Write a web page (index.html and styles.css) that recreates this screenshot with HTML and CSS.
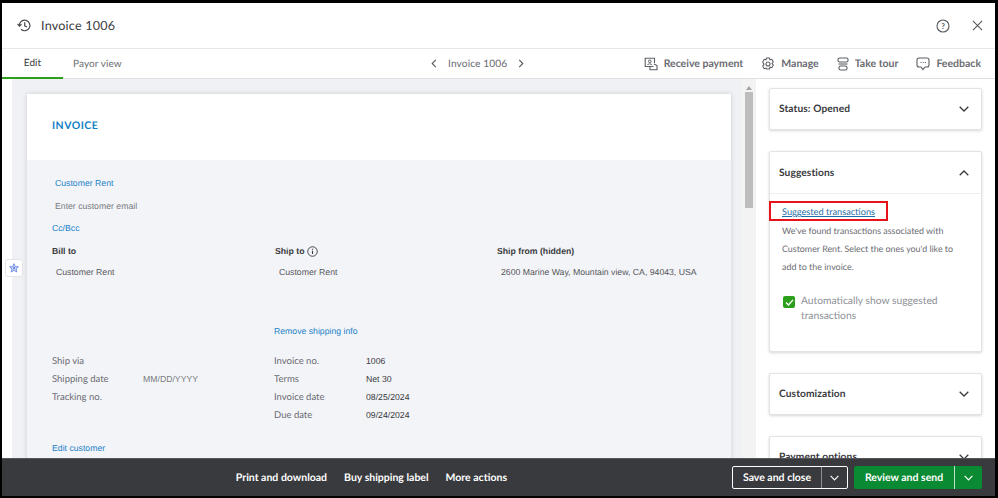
FILE: index.html
```html
<!DOCTYPE html>
<html lang="en">
<head>
<meta charset="utf-8">
<title>Invoice 1006</title>
<link rel="stylesheet" href="styles.css">
</head>
<body>
<div class="frame">
  <header class="topbar">
    <div class="title-group">
      <svg class="icon-history" viewBox="0 0 16 16" width="15" height="15"><path d="M2.6 8a5.6 5.6 0 1 1 1.7 4" fill="none" stroke="#4a4c50" stroke-width="1.3"/><path d="M0.6 6.4 2.6 8.6 4.8 6.6" fill="none" stroke="#4a4c50" stroke-width="1.3"/><path d="M8.2 4.6V8.300l2.400 1.300" fill="none" stroke="#4a4c50" stroke-width="1.3"/></svg>
      <h1 class="title">Invoice 1006</h1>
    </div>
    <div class="top-actions">
      <svg viewBox="0 0 14 14" width="14" height="14"><circle cx="7" cy="7" r="6" fill="none" stroke="#55575b" stroke-width="1.100"/><text x="7" y="9.800" class="q-mark">?</text></svg>
      <svg viewBox="0 0 12 12" width="11" height="11"><path d="M1 1 11 11M11 1 1 11" stroke="#55575b" stroke-width="1.200" fill="none"/></svg>
    </div>
  </header>

  <nav class="tabbar">
    <div class="tabs">
      <span class="tab tab-active">Edit</span>
      <span class="tab">Payor view</span>
    </div>
    <div class="pager">
      <svg viewBox="0 0 6 10" width="6" height="9"><path d="M5 1 1 5l4 4" fill="none" stroke="#55575b" stroke-width="1.200"/></svg>
      <span>Invoice 1006</span>
      <svg viewBox="0 0 6 10" width="6" height="9"><path d="M1 1l4 4-4 4" fill="none" stroke="#55575b" stroke-width="1.200"/></svg>
    </div>
    <div class="tools">
      <span class="tool"><svg viewBox="0 0 14 14" width="14" height="14"><path d="M9.500 9.500H1.200V1.200H10.500V6" fill="none" stroke="#5c5f64" stroke-width="1.100"/><circle cx="5.800" cy="4.300" r="1.300" fill="none" stroke="#5c5f64"/><path d="M3.400 8c.4-1.500 4.200-1.500 4.800 0" fill="none" stroke="#5c5f64"/><path d="M6 10v2.800h7V8.500L10 7" fill="none" stroke="#5c5f64" stroke-width="1.100"/></svg>Receive payment</span>
      <span class="tool"><svg viewBox="0 0 14 14" width="14" height="14"><path d="M5.500 1h3l.5 1.800 1.800-.5 1.500 2.600-1.300 1.600 1.300 1.600-1.500 2.600-1.800-.5-.5 1.800h-3L5 11.200l-1.800.5-1.500-2.600L3 7.500 1.700 4.900l1.500-2.600 1.800.5z" fill="none" stroke="#5c5f64" stroke-width="1.100"/><circle cx="7" cy="7" r="2" fill="none" stroke="#5c5f64" stroke-width="1.100"/></svg>Manage</span>
      <span class="tool"><svg viewBox="0 0 12 14" width="12" height="14"><rect x="1" y="1" width="10" height="4" rx="1.500" fill="none" stroke="#5c5f64" stroke-width="1.100"/><rect x="2" y="9" width="8" height="4" rx="1.500" fill="none" stroke="#5c5f64" stroke-width="1.100"/><path d="M1.500 7h9" stroke="#5c5f64" stroke-width="1.100"/></svg>Take tour</span>
      <span class="tool"><svg viewBox="0 0 14 14" width="14" height="14"><path d="M3 1h8a2 2 0 0 1 2 2v5a2 2 0 0 1-2 2H9l-2 2.600L5 10H3a2 2 0 0 1-2-2V3a2 2 0 0 1 2-2z" fill="none" stroke="#5c5f64" stroke-width="1.100"/><path d="M4.500 5.500h1M6.800 5.500h1M9 5.500h1" stroke="#5c5f64" stroke-width="1"/></svg>Feedback</span>
    </div>
  </nav>

  <main class="workspace">
    <div class="left-gutter"></div>
    <section class="canvas">
      <article class="invoice">
        <div class="invoice-head">INVOICE</div>
        <div class="invoice-form">
          <a class="link customer-link">Customer Rent</a>
          <p class="placeholder email-line">Enter customer email</p>
          <a class="link cc-link">Cc/Bcc</a>
          <div class="address-grid">
            <div class="address-col">
              <div class="addr-label">Bill to</div>
              <div class="addr-value">Customer Rent</div>
            </div>
            <div class="address-col">
              <div class="addr-label">Ship to <svg viewBox="0 0 12 12" width="11" height="11"><circle cx="6" cy="6" r="5.200" fill="none" stroke="#393a3d" stroke-width="1"/><path d="M6 5.200v3.600M6 3v1.200" stroke="#393a3d" stroke-width="1.200"/></svg></div>
              <div class="addr-value">Customer Rent</div>
            </div>
            <div class="address-col">
              <div class="addr-label">Ship from (hidden)</div>
              <div class="addr-value">2600 Marine Way, Mountain view, CA, 94043, USA</div>
            </div>
          </div>
          <a class="link remove-link">Remove shipping info</a>
          <div class="meta-grid">
            <dl class="meta meta-ship">
              <dt>Ship via</dt><dd></dd>
              <dt>Shipping date</dt><dd class="placeholder">MM/DD/YYYY</dd>
              <dt>Tracking no.</dt><dd></dd>
            </dl>
            <dl class="meta meta-inv">
              <dt>Invoice no.</dt><dd>1006</dd>
              <dt>Terms</dt><dd>Net 30</dd>
              <dt>Invoice date</dt><dd>08/25/2024</dd>
              <dt>Due date</dt><dd>09/24/2024</dd>
            </dl>
          </div>
          <a class="link edit-link">Edit customer</a>
        </div>
      </article>
    </section>
    <div class="scrollbar">
      <svg viewBox="0 0 6 4" width="6" height="4"><path d="M3 0 6 4H0z" fill="#a5a5a5"/></svg>
      <div class="thumb"></div>
    </div>
    <aside class="sidebar">
      <div class="panel panel-closed">
        <h2>Status: Opened</h2>
        <svg class="chev" viewBox="0 0 10 6" width="10" height="6"><path d="M.7.700 5 5 9.300.700" fill="none" stroke="#393a3d" stroke-width="1.300"/></svg>
      </div>
      <div class="panel panel-open">
        <div class="panel-bar">
          <h2>Suggestions</h2>
          <svg class="chev" viewBox="0 0 10 6" width="10" height="6"><path d="M.7 5.300 5 1l4.300 4.300" fill="none" stroke="#393a3d" stroke-width="1.300"/></svg>
        </div>
        <div class="panel-body">
          <a class="suggest-link">Suggested transactions</a>
          <p class="suggest-text">We've found transactions associated with Customer Rent. Select the ones you'd like to add to the invoice.</p>
          <div class="auto-row">
            <span class="checkbox"><svg viewBox="0 0 10 8" width="9" height="7"><path d="M1 4l2.800 2.800L9 1" fill="none" stroke="#fff" stroke-width="1.600"/></svg></span>
            <span class="auto-label">Automatically show suggested transactions</span>
          </div>
          <div class="red-box"></div>
        </div>
      </div>
      <div class="panel panel-closed">
        <h2>Customization</h2>
        <svg class="chev" viewBox="0 0 10 6" width="10" height="6"><path d="M.7.700 5 5 9.300.700" fill="none" stroke="#393a3d" stroke-width="1.300"/></svg>
      </div>
      <div class="panel panel-closed panel-cut">
        <h2>Payment options</h2>
        <svg class="chev" viewBox="0 0 10 6" width="10" height="6"><path d="M.7.700 5 5 9.300.700" fill="none" stroke="#393a3d" stroke-width="1.300"/></svg>
      </div>
    </aside>
    <button class="star-btn" type="button" aria-label="Assistant"><svg viewBox="0 0 12 12" width="10" height="10"><path d="M6 .8 7.500 4.300 11.200 4.600 8.400 7 9.300 10.800 6 8.800 2.700 10.800 3.600 7 .8 4.600 4.500 4.300z" fill="#d5def8" stroke="#5a7de6" stroke-width="1"/><circle cx="6" cy="6.200" r="1.300" fill="#5a7de6"/></svg></button>
  </main>

  <footer class="actionbar">
    <div class="action-links">
      <span>Print and download</span>
      <span>Buy shipping label</span>
      <span>More actions</span>
    </div>
    <div class="action-buttons">
      <div class="split split-outline">
        <span class="split-main">Save and close</span>
        <span class="split-caret"><svg viewBox="0 0 10 6" width="9" height="6"><path d="M.7.700 5 5 9.300.700" fill="none" stroke="#fff" stroke-width="1.300"/></svg></span>
      </div>
      <div class="split split-green">
        <span class="split-main">Review and send</span>
        <span class="split-caret"><svg viewBox="0 0 10 6" width="9" height="6"><path d="M.7.700 5 5 9.300.700" fill="none" stroke="#fff" stroke-width="1.300"/></svg></span>
      </div>
    </div>
  </footer>
</div>
</body>
</html>
```

FILE: styles.css
```css
* { box-sizing: border-box; }
html, body { margin: 0; padding: 0; }
body {
  width: 998px;
  height: 498px;
  overflow: hidden;
  background: #000;
  font-family: "Lato", "Liberation Sans", sans-serif;
  color: #393a3d;
  text-rendering: geometricPrecision;
}
.frame {
  display: flex;
  flex-direction: column;
  width: 998px;
  height: 498px;
  padding: 3px 3px 2px 2px;
}

/* top bar */
.topbar {
  flex: 0 0 46px;
  display: flex;
  align-items: center;
  justify-content: space-between;
  padding: 0 12px 0 15px;
  background: #fff;
  border-bottom: 1px solid #e6e7ea;
}
.title-group { display: flex; align-items: center; gap: 9px; }
.title { margin: 0; font-size: 12.600px; font-weight: 400; color: #393a3d; letter-spacing: .2px; }
.top-actions { display: flex; align-items: center; gap: 22px; }
.q-mark { font: 700 8px "Lato", sans-serif; text-anchor: middle; fill: #55575b; }

/* tab row */
.tabbar {
  flex: 0 0 30px;
  display: grid;
  grid-template-columns: 429px auto 1fr;
  align-items: stretch;
  background: #fff;
  border-bottom: 1px solid #dfe0e4;
}
.tabs { display: flex; }
.tab {
  display: flex;
  align-items: center;
  font-size: 10px;
  color: #6b6c72;
  padding-left: 10px;
  letter-spacing: .1px;
}
.tab-active { width: 61px; padding-left: 0; justify-content: center; color: #393a3d; border-bottom: 2px solid #2ca01c; margin-bottom: -1px; }
.tab + .tab { padding-left: 10px; }
.pager { display: flex; align-items: center; gap: 11px; font-size: 10.200px; color: #6b6c72; letter-spacing: .1px; }
.tools { display: flex; align-items: center; justify-content: flex-end; gap: 18px; padding-right: 14px; }
.tool { display: flex; align-items: center; gap: 6px; font-size: 10.500px; font-weight: 700; color: #6b6c72; }

/* body */
.workspace { position: relative; flex: 1; min-height: 0; display: flex; background: #fff; overflow: hidden; }
.left-gutter { flex: 0 0 10px; background: #fff; }
.canvas { flex: 0 0 730px; padding: 15px 11px 0 15px; background: #f0f1f4; overflow: hidden; }
.invoice { background: #fff; box-shadow: 0 0 5px rgba(0,0,0,.14); height: 420px; }
.invoice-head {
  height: 66px;
  padding: 26px 25px 0;
  font: 700 10.500px "Lato", sans-serif;
  letter-spacing: .5px;
  color: #0f7fc4;
}
.invoice-form {
  height: 354px;
  padding: 0 25px;
  background: #f3f4f8;
  font: 400 8.700px/18px "Liberation Sans", Arial, sans-serif;
  color: #55575b;
  display: flex;
  flex-direction: column;
  align-items: flex-start;
}
.link { color: #1a82c8; }
.placeholder { color: #77797e; }
.customer-link { margin: 14px 0 0 3px; }
.email-line { margin: 5px 0 0 3px; }
.cc-link { margin-top: 4px; }
.address-grid { display: grid; grid-template-columns: 223px 222px 1fr; width: 100%; margin-top: 5px; }
.addr-label { display: flex; align-items: center; gap: 3px; font-weight: 700; color: #393a3d; }
.addr-value { margin: 3px 0 0 4px; }
.remove-link { margin: 41px 0 0 222px; }
.meta-grid { display: grid; grid-template-columns: 222px 1fr; width: 100%; margin-top: 12px; }
.meta { display: grid; grid-template-columns: 91px 1fr; grid-auto-rows: 18px; margin: 0; }
.meta-inv { grid-template-columns: 92px 1fr; }
.meta dt { padding-top: 1px; color: #6b6c72; font-family: "Lato", sans-serif; font-size: 9.500px; }
.meta dd { margin: 0; }
.meta-inv dd { color: #393a3d; }
.edit-link { margin-top: 15px; }

/* scrollbar */
.scrollbar {
  flex: 0 0 14px;
  display: flex;
  flex-direction: column;
  align-items: center;
  padding-top: 7px;
  gap: 2px;
  background: #f3f3f3;
}
.thumb { width: 8px; height: 116px; background: #bdbdbd; }

/* side */
.sidebar { flex: 1; padding: 9px 13px 0; background: #fff; display: flex; flex-direction: column; gap: 21px; }
.panel { flex: none; background: #fff; border: 1px solid #e2e3e6; border-radius: 2px; box-shadow: 0 1px 3px rgba(0,0,0,.16); }
.panel h2 { margin: 0; font-size: 10.200px; font-weight: 700; color: #393a3d; letter-spacing: .1px; }
.panel-closed { height: 42px; display: flex; align-items: center; justify-content: space-between; padding: 0 12px 0 9px; }
.panel-cut { flex-shrink: 0; }
.panel-open { height: 201px; }
.panel-bar { height: 42px; display: flex; align-items: center; justify-content: space-between; padding: 0 12px 0 9px; border-bottom: 1px solid #eceef0; }
.panel-body { position: relative; padding: 11px 12px 0 12px; }
.suggest-link { display: block; font-size: 9.200px; line-height: 14px; color: #1f6fa8; text-decoration: underline; }
.suggest-text { margin: 3px 0 0; font-size: 8.900px; line-height: 18px; color: #6b6c72; }
.auto-row { display: flex; gap: 6px; margin: 18px 0 0 1px; }
.checkbox { flex: 0 0 12px; height: 12px; margin-top: 2px; display: flex; align-items: center; justify-content: center; background: #2ca01c; border-radius: 2px; }
.auto-label { font-size: 10.300px; line-height: 15px; color: #8d9096; }
.red-box { position: absolute; left: -1px; top: 7px; width: 119px; height: 20px; border: 2px solid #e8121a; }

/* floating star */
.star-btn {
  position: absolute;
  left: 3px;
  top: 180px;
  width: 18px;
  height: 18px;
  padding: 0;
  display: flex;
  align-items: center;
  justify-content: center;
  background: #fff;
  border: 1px solid #e4e5e8;
  border-radius: 3px;
}

/* bottom */
.actionbar {
  flex: 0 0 38px;
  display: grid;
  grid-template-columns: 1fr auto;
  align-items: center;
  background: #393a3d;
  border-top: 1px solid #55575b;
  padding: 0 13px 0 0;
  color: #fff;
  font-size: 10.500px;
  font-weight: 700;
}
.action-links { display: flex; justify-content: flex-end; gap: 17px; padding-right: 225px; }
.action-buttons { display: flex; gap: 6px; }
.split { display: flex; align-items: center; height: 23px; border-radius: 2px; }
.split-main { display: flex; align-items: center; justify-content: center; height: 100%; }
.split-caret { display: flex; align-items: center; justify-content: center; height: 100%; }
.split-outline { border: 1px solid #fff; }
.split-outline .split-main { width: 88px; }
.split-outline .split-caret { width: 26px; border-left: 1px solid #8d9096; }
.split-green { background: #0a8a32; }
.split-green .split-main { width: 100px; }
.split-green .split-caret { width: 28px; border-left: 1px solid #bfe0c8; }
```
